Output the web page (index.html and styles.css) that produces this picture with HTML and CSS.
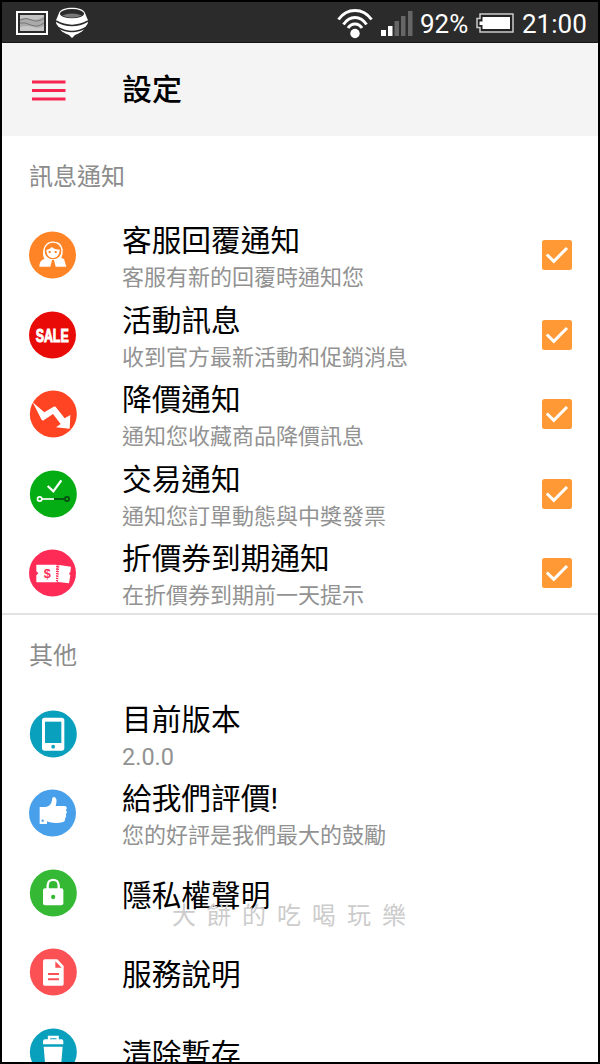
FILE: index.html
```html
<!DOCTYPE html>
<html lang="zh-Hant">
<head>
<meta charset="utf-8">
<title>設定</title>
<link rel="stylesheet" href="styles.css">
</head>
<body>
<div class="screen">
  <div class="status">
    <svg class="s-picture" width="32" height="24" viewBox="0 0 32 24"><rect x="1" y="1" width="30" height="22" fill="#2b2b2b" stroke="#fff" stroke-width="2"/><rect x="4" y="4" width="24" height="16" fill="#aaa"/><path d="M4 8q5-2 10 0t14-2v-2H4z" fill="#c5c5c5"/><path d="M4 9q6-3 12 0t12-2M4 12q5-1 11 2t13-2" fill="none" stroke="#777"/><path d="M4 16q8-2 14 0t10-1v5H4z" fill="#c6c6c6"/></svg>
    <svg class="s-top" width="34" height="32" viewBox="0 0 34 32"><path d="M4 6C6-1 28-1 30 6l2 5c2 3 1 6-1 8-2 5-6 7-11 9l-3 3-3-3C9 26 5 24 3 19c-2-2-3-5-1-8z" fill="#fff"/><ellipse cx="17" cy="6.700" rx="12" ry="4.600" fill="#2b2b2b"/><path d="M7 8.500q10-4 20 0Q17 13 7 8.500z" fill="#777"/><path d="M1 14q16 9 32 0M3 20.500q14 8 28 0" fill="none" stroke="#2b2b2b" stroke-width="1.500"/></svg>
    <svg class="s-wifi" width="36" height="31" viewBox="0 0 36 31"><g fill="none" stroke="#fff" stroke-width="3"><path d="M1.500 11.500C10-.5 26-.5 34.500 11.500"/><path d="M6.500 16.500C12.500 7 23.500 7 29.500 16.500"/><path d="M11 20C14.500 14.500 21.500 14.500 25 20"/></g><circle cx="18" cy="25.500" r="4.700" fill="#fff"/></svg>
    <svg class="s-signal" width="32" height="25" viewBox="0 0 32 25"><path d="M0 19h5v6H0zM7 15h4.500v10H7z" fill="#fff"/><path d="M13.500 10H18v15h-4.500zM20 5h4.500v20H20zM27 0h4.500v25H27z" fill="#666"/></svg>
    <span class="s-text">92%</span>
    <svg class="s-battery" width="38" height="20" viewBox="0 0 38 20"><path d="M4 1h33v18H4v-4.500H1v-9h3z" fill="#222" stroke="#ccc" stroke-width="1.500"/><path d="M6.500 4H34v12H6.500v-4H3.500V8.500h3z" fill="#fff"/></svg>
    <span class="s-text s-clock">21:00</span>
  </div>
  <header class="bar">
    <svg width="34" height="22" viewBox="0 0 34 22"><path d="M0 3h33.500M0 11.500h33.500M0 20h33.500" stroke="#f5254f" stroke-width="3.200"/></svg>
    <h1 class="bar-title">設定</h1>
  </header>
  <main class="content">
    <section class="group">
      <h2 class="heading">訊息通知</h2>
      <div class="row">
        <svg class="icon" viewBox="0 0 144 144"><circle cx="70.500" cy="72" r="70.500" fill="#ff8426"/><path d="M46 84C40 72 41 56 47 46c7-13 20-16 29-14 14 0 23 9 25 23 1 12-1 19-4 26l8 3 7 23H80l-5-20h-6l-5 20H31c1-14 5-20 15-23z" fill="#fff"/><circle cx="72" cy="60" r="25" fill="#ff8426"/><path d="M52 57c7-1 12-4 16-9 7 6 14 9 24 7 0 17-9 26-20 26S53 74 52 57z" fill="#fff"/><path d="M59 60h6v6h-6zM77 60h6v6h-6z" fill="#ff8426"/></svg>
        <div class="texts"><div class="title">客服回覆通知</div><div class="sub">客服有新的回覆時通知您</div></div>
        <svg class="check" viewBox="0 0 30 30"><rect width="30" height="30" rx="2.500" fill="#ff9935"/><path d="M4.800 14.500l7 6.800L25 8" fill="none" stroke="#fff" stroke-width="3"/></svg>
      </div>
      <div class="row">
        <svg class="icon" viewBox="0 0 144 144"><circle cx="70.500" cy="72" r="70.500" fill="#e80b08"/><text class="sale" x="20" y="93" textLength="99" lengthAdjust="spacingAndGlyphs">SALE</text></svg>
        <div class="texts"><div class="title">活動訊息</div><div class="sub">收到官方最新活動和促銷消息</div></div>
        <svg class="check" viewBox="0 0 30 30"><rect width="30" height="30" rx="2.500" fill="#ff9935"/><path d="M4.800 14.500l7 6.800L25 8" fill="none" stroke="#fff" stroke-width="3"/></svg>
      </div>
      <div class="row">
        <svg class="icon" viewBox="0 0 144 144"><circle cx="73" cy="72" r="70.500" fill="#ff4423"/><path d="M11 37l35 30 28-17q5-2 8 3l25 32 17-10-2 41-41-4 14-10-23-30-28 19q-4 2-7-3z" fill="#fff"/></svg>
        <div class="texts"><div class="title">降價通知</div><div class="sub">通知您收藏商品降價訊息</div></div>
        <svg class="check" viewBox="0 0 30 30"><rect width="30" height="30" rx="2.500" fill="#ff9935"/><path d="M4.800 14.500l7 6.800L25 8" fill="none" stroke="#fff" stroke-width="3"/></svg>
      </div>
      <div class="row">
        <svg class="icon" viewBox="0 0 144 144"><circle cx="73" cy="72" r="70.500" fill="#04ad14"/><path d="M56 48l17 16 24-33" fill="none" stroke="#fff" stroke-width="7"/><g fill="none" stroke-width="5"><path d="M39 87h36" stroke="#fff"/><circle cx="32" cy="87" r="6.500" stroke="#fff"/><path d="M75 87h32" stroke="#064c12"/><circle cx="114" cy="87" r="6.500" stroke="#064c12"/></g></svg>
        <div class="texts"><div class="title">交易通知</div><div class="sub">通知您訂單動態與中獎發票</div></div>
        <svg class="check" viewBox="0 0 30 30"><rect width="30" height="30" rx="2.500" fill="#ff9935"/><path d="M4.800 14.500l7 6.800L25 8" fill="none" stroke="#fff" stroke-width="3"/></svg>
      </div>
      <div class="row">
        <svg class="icon" viewBox="0 0 144 144"><circle cx="70.500" cy="72" r="70.500" fill="#ff2b57"/><path d="M22 47h59v53H22V79l6-6-6-6z" fill="#fff"/><path d="M91 48l35 5-2 16-4 5 4 5-4 24-33-4z" fill="#fff"/><path d="M83 48v52M89 49l-3 49" stroke="#fff" stroke-width="4" stroke-dasharray="3 4"/><text class="dollar" x="55" y="87" text-anchor="middle">$</text></svg>
        <div class="texts"><div class="title">折價券到期通知</div><div class="sub">在折價券到期前一天提示</div></div>
        <svg class="check" viewBox="0 0 30 30"><rect width="30" height="30" rx="2.500" fill="#ff9935"/><path d="M4.800 14.500l7 6.800L25 8" fill="none" stroke="#fff" stroke-width="3"/></svg>
      </div>
    </section>
    <section class="group group-other">
      <h2 class="heading">其他</h2>
      <div class="row">
        <svg class="icon" viewBox="0 0 144 144"><circle cx="73" cy="72" r="70.500" fill="#08a0bc"/><rect x="39" y="23" width="67" height="99" rx="8" fill="#fff"/><path d="M48 35h49v64H48z" fill="#08a0bc"/><circle cx="72.500" cy="110" r="5.500" fill="#08a0bc"/></svg>
        <div class="texts"><div class="title">目前版本</div><div class="sub version">2.0.0</div></div>
      </div>
      <div class="row">
        <svg class="icon" viewBox="0 0 144 144"><circle cx="70.500" cy="72" r="70.500" fill="#489fea"/><path d="M32 54h18c10-1 17-8 19-20 0-9 4-11 8-9 8 4 6 15 3 26h26c9 1 9 9 4 12 5 4 4 10 0 13 3 5 2 9-2 12 2 5-1 10-6 11-14 4-34 5-48-2v8H32z" fill="#fff"/><circle cx="41" cy="95" r="3.500" fill="#489fea"/></svg>
        <div class="texts"><div class="title">給我們評價!</div><div class="sub">您的好評是我們最大的鼓勵</div></div>
      </div>
      <div class="row">
        <svg class="icon" viewBox="0 0 144 144"><circle cx="73" cy="72" r="70.500" fill="#35b934"/><path d="M56 60V49c0-22 33-22 33 0v11" fill="none" stroke="#fff" stroke-width="7"/><rect x="42" y="58" width="61" height="51" rx="6" fill="#fff"/><circle cx="72.500" cy="84" r="6.500" fill="#35b934"/></svg>
        <div class="texts"><div class="title">隱私權聲明</div></div>
      </div>
      <div class="row">
        <svg class="icon" viewBox="0 0 144 144"><circle cx="73" cy="72" r="70.500" fill="#fb5054"/><path d="M48 34h37l19 20v54q0 5-5 5H47q-5 0-5-5V40q0-6 6-6z" fill="#fff"/><path d="M79 40v19h19zM57 75h33v6H57zM57 91h33v6H57z" fill="#fb5054"/></svg>
        <div class="texts"><div class="title">服務說明</div></div>
      </div>
      <div class="row">
        <svg class="icon" viewBox="0 0 144 144"><circle cx="73" cy="72" r="70.500" fill="#08a0bc"/><path d="M60 37V27h26v10" fill="none" stroke="#fff" stroke-width="7"/><path d="M48 34h49q6 0 6 6v9H42v-9q0-6 6-6zM44 56h57l-5 59H49z" fill="#fff"/></svg>
        <div class="texts"><div class="title">清除暫存</div></div>
      </div>
    </section>
  </main>
  <div class="watermark">大餅的吃喝玩樂</div>
</div>
</body>
</html>
```
FILE: styles.css
```css
* { box-sizing: border-box; }
body {
  margin: 0;
  font-family: Roboto, "Noto Sans CJK TC", sans-serif;
  background: #000;
}
.screen {
  position: relative;
  width: 600px;
  height: 1064px;
  border: 2px solid #000;
  background: #fff;
  overflow: hidden;
}
.status {
  display: flex;
  align-items: center;
  height: 41px;
  padding: 2px 10px 0 14px;
  background: #2b2b2b;
  border-bottom: 1px solid #161616;
}
.status svg { flex: none; }
.s-top { margin-left: 7px; }
.s-wifi { margin-left: auto; }
.s-signal { margin-left: 8px; }
.s-text {
  width: 49px;
  margin-left: 7px;
  padding-top: 2px;
  color: #fff;
  font-size: 26px;
  line-height: 30px;
  white-space: nowrap;
}
.s-battery { margin-left: 7px; }
.s-clock { width: 66px; margin-left: 8px; }
.bar {
  display: flex;
  align-items: center;
  height: 93px;
  padding-left: 30px;
  background: #f4f4f4;
}
.bar-title {
  margin: 0 0 0 56px;
  font-size: 30px;
  font-weight: 500;
  line-height: 40px;
  color: #000;
}
.heading {
  display: flex;
  align-items: center;
  height: 79.25px;
  margin: 0;
  padding: 0 0 2px 27px;
  font-size: 24px;
  font-weight: 400;
  color: #8c8c8c;
}
.group-other { border-top: 2px solid #e2e2e2; }
.row {
  display: flex;
  align-items: center;
  height: 79.5px;
  padding: 0 26px 0 27px;
}
.icon { flex: none; width: 48px; height: 48px; }
.texts { flex: 1; margin-left: 45px; padding-top: 5px; }
.title { font-size: 29.700px; line-height: 41px; color: #000; }
.sub { font-size: 22px; line-height: 34px; color: #929292; }
.version { font-size: 23.500px; }
.check { flex: none; width: 30px; height: 30px; }
.sale { font: 700 54px "Liberation Sans", sans-serif; fill: #fff; stroke: #fff; stroke-width: 3px; }
.dollar { font: 700 38px "Liberation Sans", sans-serif; fill: #ff2b57; }
.watermark {
  position: absolute;
  left: 170px;
  top: 897px;
  font-size: 24px;
  font-weight: 400;
  line-height: 34px;
  letter-spacing: 11px;
  color: #ccc;
}
```
